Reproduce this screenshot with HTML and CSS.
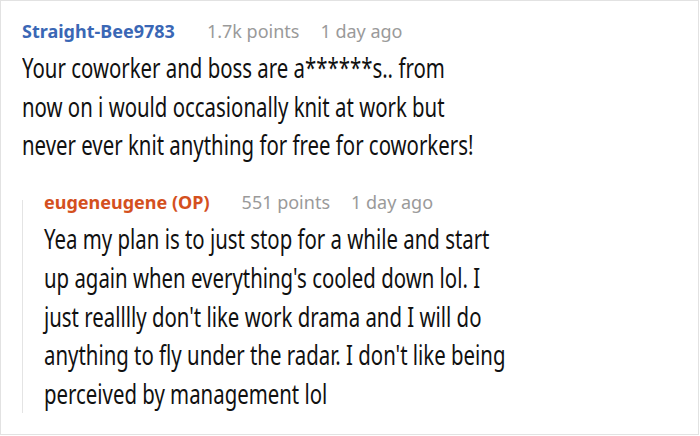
FILE: index.html
```html
<!DOCTYPE html>
<html>
<head>
<meta charset="utf-8">
<link rel="stylesheet" href="styles.css">
</head>
<body>
<div class="frame">
  <div class="comment">
    <div class="meta">
      <span class="user">Straight-Bee9783</span>
      <span class="info">1.7k points</span>
      <span class="info">1 day ago</span>
    </div>
    <p class="text">Your coworker and boss are a******s.. from now on i would occasionally knit at work but never ever knit anything for free for coworkers!</p>
    <div class="reply">
      <div class="meta">
        <span class="user op">eugeneugene (OP)</span>
        <span class="info">551 points</span>
        <span class="info">1 day ago</span>
      </div>
      <p class="text">Yea my plan is to just stop for a while and start up again when everything's cooled down lol. I just realllly don't like work drama and I will do anything to fly under the radar. I don't like being perceived by management lol</p>
    </div>
  </div>
</div>
</body>
</html>
```
FILE: styles.css
```css
html, body {
  margin: 0;
  padding: 0;
  background: #fff;
}
.frame {
  width: 699px;
  height: 435px;
  border: 1px solid #e2e2e2;
  box-sizing: border-box;
  overflow: hidden;
  font-family: "Noto Sans", sans-serif;
}
.comment {
  padding: 17px 0 0 21px;
}
.meta {
  display: flex;
  gap: 21px;
  font-size: 18px;
  line-height: 26px;
}
.user {
  font-weight: bold;
  color: #3a67b5;
  margin-right: 11px;
}
.user.op {
  color: #d4501e;
}
.info {
  color: #9a9a9a;
}
.text {
  margin: 5px 0 0 0;
  font-size: 27px;
  line-height: 38.6px;
  color: #111;
  width: 610px;
  transform: scaleX(0.755);
  transform-origin: left top;
}
.reply .text {
  width: 622px;
}
.reply {
  position: relative;
  margin-top: 24.6px;
  padding-left: 22px;
}
.reply::before {
  content: "";
  position: absolute;
  left: 0;
  top: 11px;
  bottom: 0;
  width: 1px;
  background: #e4e4e4;
}
```
